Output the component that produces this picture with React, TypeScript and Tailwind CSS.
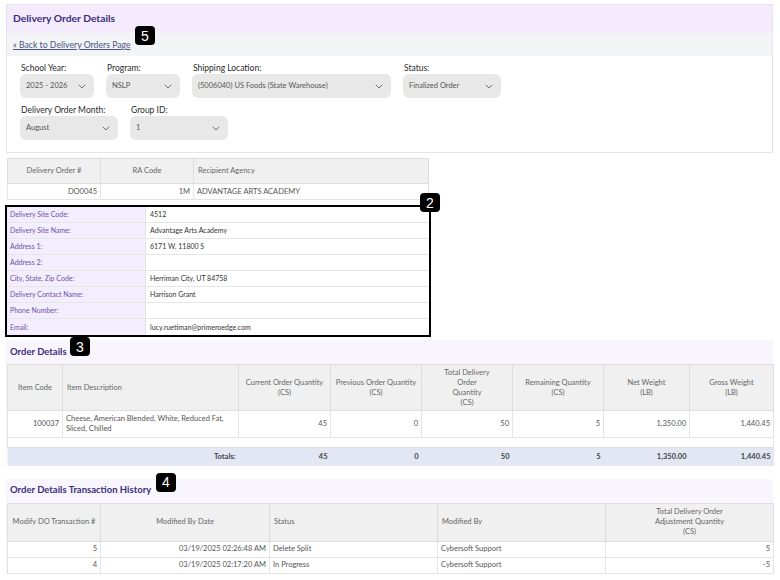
import React from "react";

const Badge = ({ n, className }: { n: string; className: string }) => (
  <div
    className={`absolute flex h-[19px] w-[20px] items-center justify-center rounded-[4px] bg-black text-[14px] leading-none text-white ${className}`}
    style={{ fontFamily: '"Liberation Sans", Arial, sans-serif' }}
  >
    {n}
  </div>
);

const Chevron = () => (
  <svg width="8" height="5" viewBox="0 0 8 5" fill="none">
    <path d="M1 1L4 4L7 1" stroke="#707070" strokeWidth="1" strokeLinecap="round" strokeLinejoin="round" />
  </svg>
);

const Select = ({ label, value, w }: { label: string; value: string; w: string }) => (
  <div className={`flex flex-col ${w}`}>
    <div className="h-[12px] pl-[1px] text-[8.5px] leading-[12px] text-[#2a2a2a]">{label}</div>
    <div className="flex h-[24px] items-center justify-between rounded-[6px] bg-[#e8e8e8] pl-[6px] pr-[8px] text-[7.5px] text-[#555]">
      <span>{value}</span>
      <Chevron />
    </div>
  </div>
);

const siteRows: [string, string][] = [
  ["Delivery Site Code:", "4512"],
  ["Delivery Site Name:", "Advantage Arts Academy"],
  ["Address 1:", "6171 W. 11800 S"],
  ["Address 2:", ""],
  ["City, State, Zip Code:", "Herriman City, UT 84758"],
  ["Delivery Contact Name:", "Harrison Grant"],
  ["Phone Number:", ""],
  ["Email:", "lucy.ruetiman@primeroedge.com"],
];

const orderCols = [55, 176, 92, 91, 91, 91, 86, 84];
const histCols = [93, 169, 168, 168, 168];

const th = "border border-[#dedede] font-normal text-[#666] px-[4px]";
const td = "border border-[#e4e4e4] text-[#555] px-[3px]";

export default function App() {
  return (
    <div
      className="relative h-[580px] w-[780px] overflow-hidden bg-white text-[7.5px]"
      style={{ fontFamily: 'Lato, "Open Sans", sans-serif' }}
    >
      {/* Top panel */}
      <div className="relative ml-[6px] mt-[4px] w-[767px] border border-[#e6e6ea]">
        <div className="flex h-[28px] items-center bg-[#f4ebfd] px-[6px] text-[10.3px] font-bold text-[#3b2d7c]">
          Delivery Order Details
        </div>
        <div className="flex h-[23px] items-center bg-[#f3f4f6] px-[6px]">
          <span className="text-[8.7px] text-[#4a5585] underline">« Back to Delivery Orders Page</span>
        </div>
        <Badge n="5" className="left-[128px] top-[21px]" />
        <div className="flex flex-col gap-[6px] px-[13px] pb-[12px] pt-[6px]">
          <div className="flex gap-[12px]">
            <Select label="School Year:" value="2025 - 2026" w="w-[74px]" />
            <Select label="Program:" value="NSLP" w="w-[74px]" />
            <Select label="Shipping Location:" value="(5006040) US Foods (State Warehouse)" w="w-[199px]" />
            <Select label="Status:" value="Finalized Order" w="w-[98px]" />
          </div>
          <div className="flex gap-[12px]">
            <Select label="Delivery Order Month:" value="August" w="w-[98px]" />
            <Select label="Group ID:" value="1" w="w-[98px]" />
          </div>
        </div>
      </div>

      {/* Delivery order table */}
      <table className="ml-[7px] mt-[5px] w-[421px] table-fixed border-collapse">
        <colgroup>
          <col style={{ width: 93 }} />
          <col style={{ width: 93 }} />
          <col style={{ width: 235 }} />
        </colgroup>
        <thead>
          <tr className="h-[25px] bg-[#f0f0f0]">
            <th className={`${th} text-center`}>Delivery Order #</th>
            <th className={`${th} text-center`}>RA Code</th>
            <th className={`${th} text-left`}>Recipient Agency</th>
          </tr>
        </thead>
        <tbody>
          <tr className="h-[16px]">
            <td className={`${td} text-right`}>DO0045</td>
            <td className={`${td} text-right`}>1M</td>
            <td className={`${td} text-left`}>ADVANTAGE ARTS ACADEMY</td>
          </tr>
        </tbody>
      </table>

      {/* Site box */}
      <div className="relative ml-[5px] mt-[5px] w-[426px] border-2 border-black">
        {siteRows.map(([k, v], i) => (
          <div key={i} className="flex h-[16px] border-b border-[#e6e6e6] last:border-b-0">
            <div className="flex w-[139px] items-center border-r border-[#e4e4e4] bg-[#f3edfd] pl-[3px] text-[7px] text-[#6d52a8]">
              {k}
            </div>
            <div className="flex flex-1 items-center pl-[4px] text-[7px] text-[#333]">{v}</div>
          </div>
        ))}
      </div>
      <Badge n="2" className="left-[420px] top-[193px]" />

      {/* Order details */}
      <div className="relative ml-[6px] mt-[3px] w-[767px] bg-[#f8f6fc]">
        <div className="flex h-[24px] items-center px-[4px] text-[9.5px] font-bold text-[#3b2d7c]">Order Details</div>
        <Badge n="3" className="left-[64px] top-[-3px]" />
        <table className="ml-[1px] w-[766px] table-fixed border-collapse">
          <colgroup>
            {orderCols.map((w, i) => (
              <col key={i} style={{ width: w }} />
            ))}
          </colgroup>
          <thead>
            <tr className="h-[46px] bg-[#f0f0f0] leading-[10px]">
              <th className={`${th} text-center`}>Item Code</th>
              <th className={`${th} text-left`}>Item Description</th>
              <th className={`${th} text-center`}>Current Order Quantity<br />(CS)</th>
              <th className={`${th} text-center`}>Previous Order Quantity<br />(CS)</th>
              <th className={`${th} text-center`}>Total Delivery<br />Order<br />Quantity<br />(CS)</th>
              <th className={`${th} text-center`}>Remaining Quantity<br />(CS)</th>
              <th className={`${th} text-center`}>Net Weight<br />(LB)</th>
              <th className={`${th} text-center`}>Gross Weight<br />(LB)</th>
            </tr>
          </thead>
          <tbody className="bg-white">
            <tr className="h-[27px] leading-[10px]">
              <td className={`${td} text-right`}>100037</td>
              <td className={`${td} text-left`}>Cheese, American Blended, White, Reduced Fat, Sliced, Chilled</td>
              <td className={`${td} text-right`}>45</td>
              <td className={`${td} text-right`}>0</td>
              <td className={`${td} text-right`}>50</td>
              <td className={`${td} text-right`}>5</td>
              <td className={`${td} text-right`}>1,350.00</td>
              <td className={`${td} text-right`}>1,440.45</td>
            </tr>
            <tr className="h-[10px]">
              <td colSpan={8} className="border-x border-[#e4e4e4]"></td>
            </tr>
            <tr className="h-[18px] bg-[#e3e7f4] font-bold text-[#444]">
              <td colSpan={2} className="border-t border-[#d8dcea] px-[3px] text-right">Totals:</td>
              <td className="border-t border-[#d8dcea] px-[3px] text-right">45</td>
              <td className="border-t border-[#d8dcea] px-[3px] text-right">0</td>
              <td className="border-t border-[#d8dcea] px-[3px] text-right">50</td>
              <td className="border-t border-[#d8dcea] px-[3px] text-right">5</td>
              <td className="border-t border-[#d8dcea] px-[3px] text-right">1,350.00</td>
              <td className="border-t border-[#d8dcea] px-[3px] text-right">1,440.45</td>
            </tr>
          </tbody>
        </table>
      </div>

      {/* Transaction history */}
      <div className="relative ml-[6px] mt-[13px] w-[767px] bg-[#f8f6fc]">
        <div className="flex h-[24px] items-center px-[4px] text-[9.5px] font-bold text-[#3b2d7c]">
          Order Details Transaction History
        </div>
        <Badge n="4" className="left-[150px] top-[-6px]" />
        <table className="ml-[1px] w-[766px] table-fixed border-collapse">
          <colgroup>
            {histCols.map((w, i) => (
              <col key={i} style={{ width: w }} />
            ))}
          </colgroup>
          <thead>
            <tr className="h-[38px] bg-[#f0f0f0] leading-[10px]">
              <th className={`${th} text-center`}>Modify DO Transaction #</th>
              <th className={`${th} text-center`}>Modified By Date</th>
              <th className={`${th} text-left`}>Status</th>
              <th className={`${th} text-left`}>Modified By</th>
              <th className={`${th} text-center`}>Total Delivery Order<br />Adjustment Quantity<br />(CS)</th>
            </tr>
          </thead>
          <tbody className="bg-white">
            {[
              ["5", "03/19/2025 02:26:48 AM", "Delete Split", "Cybersoft Support", "5"],
              ["4", "03/19/2025 02:17:20 AM", "In Progress", "Cybersoft Support", "-5"],
            ].map((r, i) => (
              <tr key={i} className="h-[16px]">
                <td className={`${td} text-right`}>{r[0]}</td>
                <td className={`${td} text-right`}>{r[1]}</td>
                <td className={`${td} text-left`}>{r[2]}</td>
                <td className={`${td} text-left`}>{r[3]}</td>
                <td className={`${td} text-right`}>{r[4]}</td>
              </tr>
            ))}
          </tbody>
        </table>
      </div>
    </div>
  );
}
